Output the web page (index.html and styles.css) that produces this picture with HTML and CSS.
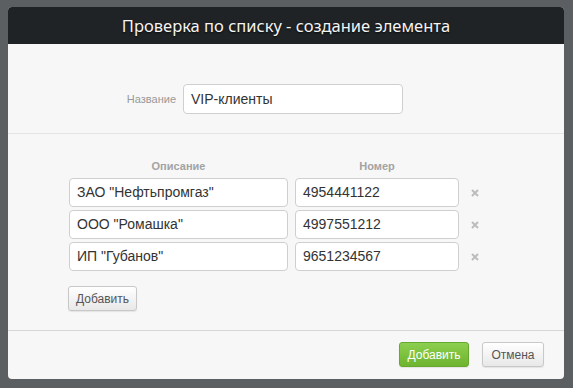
FILE: index.html
```html
<!DOCTYPE html>
<html>
<head>
<meta charset="utf-8">
<link rel="stylesheet" href="styles.css">
</head>
<body>
<div class="dialog">
  <div class="header">Проверка по списку - создание элемента</div>
  <div class="name-section">
    <label class="name-label">Название</label>
    <div class="input name-input">VIP-клиенты</div>
  </div>
  <div class="list-section">
    <div class="list-head">
      <div class="col-desc">Описание</div>
      <div class="col-num">Номер</div>
    </div>
    <div class="rows">
      <div class="row">
        <div class="input col-desc">ЗАО "Нефтьпромгаз"</div>
        <div class="input col-num">4954441122</div>
        <svg class="remove" width="8" height="8" viewBox="0 0 8 8"><path d="M1 1L7 7M7 1L1 7" stroke="#bcbcbc" stroke-width="2"/></svg>
      </div>
      <div class="row">
        <div class="input col-desc">ООО "Ромашка"</div>
        <div class="input col-num">4997551212</div>
        <svg class="remove" width="8" height="8" viewBox="0 0 8 8"><path d="M1 1L7 7M7 1L1 7" stroke="#bcbcbc" stroke-width="2"/></svg>
      </div>
      <div class="row">
        <div class="input col-desc">ИП "Губанов"</div>
        <div class="input col-num">9651234567</div>
        <svg class="remove" width="8" height="8" viewBox="0 0 8 8"><path d="M1 1L7 7M7 1L1 7" stroke="#bcbcbc" stroke-width="2"/></svg>
      </div>
    </div>
    <button class="btn add-btn">Добавить</button>
  </div>
  <div class="footer">
    <button class="btn btn-green">Добавить</button>
    <button class="btn">Отмена</button>
  </div>
</div>
</body>
</html>
```
FILE: styles.css
```css
html, body {
  margin: 0;
  padding: 0;
  background: #5b5f62;
  height: 100%;
}
body {
  padding: 7px 0 0 8px;
  box-sizing: border-box;
  font-family: "Liberation Sans", Arial, sans-serif;
}
.dialog {
  width: 556px;
  height: 372px;
  background: #f7f7f7;
  border-radius: 4px;
  overflow: hidden;
  display: flex;
  flex-direction: column;
}
.header {
  height: 37px;
  background: #202326;
  color: #f4f4f4;
  font-family: "Noto Sans", "Open Sans", sans-serif;
  font-size: 16.5px;
  line-height: 37px;
  text-align: center;
  text-shadow: 0 1px 2px rgba(0,0,0,0.8);
}
.name-section {
  height: 90px;
  box-sizing: border-box;
  padding-top: 40px;
  border-bottom: 1px solid #e4e4e4;
  display: flex;
  align-items: flex-start;
  gap: 7px;
}
.name-label {
  width: 168px;
  text-align: right;
  font-size: 11px;
  color: #999;
  line-height: 30px;
}
.input {
  box-sizing: border-box;
  background: #fff;
  border: 1px solid #cfcfcf;
  border-radius: 4px;
  color: #333;
  font-size: 14px;
  padding-left: 7px;
  white-space: nowrap;
}
.name-input {
  width: 220px;
  height: 30px;
  line-height: 28px;
}
.list-section {
  height: 197px;
  box-sizing: border-box;
  padding: 25px 0 0 61px;
  border-bottom: 1px solid #d6d6d6;
}
.list-head {
  display: flex;
  gap: 7px;
  font-size: 11px;
  font-weight: bold;
  color: #a3a3a3;
  line-height: 14px;
  margin-bottom: 5px;
}
.list-head .col-desc, .list-head .col-num {
  text-align: center;
}
.col-desc { width: 219px; }
.col-num { width: 164px; }
.rows {
  display: flex;
  flex-direction: column;
  gap: 3px;
}
.row {
  display: flex;
  align-items: center;
  gap: 7px;
}
.row .input {
  height: 29px;
  line-height: 27px;
}
.remove {
  margin-left: 5px;
}
.btn {
  height: 25px;
  box-sizing: border-box;
  border: 1px solid #c8c8c8;
  border-radius: 3px;
  background: linear-gradient(#ffffff, #e8e8e8);
  box-shadow: 0 1px 1px rgba(0,0,0,0.08);
  color: #555;
  font-family: "Liberation Sans", Arial, sans-serif;
  font-size: 12px;
  padding: 0;
}
.add-btn {
  margin-top: 15px;
  margin-left: -1px;
  width: 69px;
}
.footer {
  flex: 1;
  display: flex;
  justify-content: flex-end;
  align-items: flex-start;
  padding: 11px 20px 0 0;
  gap: 13px;
}
.footer .btn { width: 62px; }
.footer .btn-green {
  width: 70px;
  background: linear-gradient(#8ccf4e, #6db42f);
  border-color: #66a92d;
  color: #fff;
}
```
